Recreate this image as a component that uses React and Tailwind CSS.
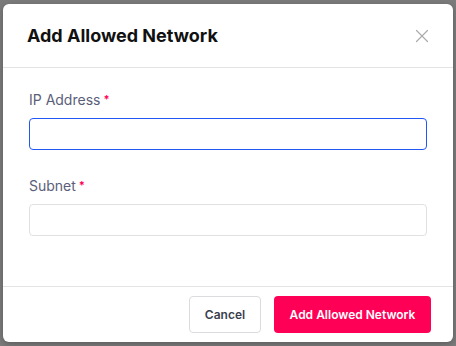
/**
 * Add Allowed Network modal over a dimmed page.
 */
import { X } from "lucide-react";

const FONT = { fontFamily: "Inter, 'Noto Sans', sans-serif" };

/** Label with red required marker */
function FieldLabel({ children }) {
  return (
    <label className="flex items-start text-[14px] leading-[20px] text-[#5b5e78]">
      {children}
      <span className="ml-[3px] mt-[2px] text-[11px] leading-[14px] font-bold text-[#ff0057]">*</span>
    </label>
  );
}

function App() {
  return (
    <div
      className="w-[456px] h-[346px] overflow-hidden bg-[#7b7b7b] pt-[4px] pl-[3px]"
      style={FONT}
    >
      <div className="w-[450px] h-[338px] bg-white rounded-[6px] flex flex-col shadow-[0_2px_6px_rgba(0,0,0,0.25)]">
        {/* ==================== HEADER ==================== */}
        <div className="h-[64px] flex items-center justify-between pl-[24px] pr-[20px] border-b border-[#e3e3e3]">
          <h2 className="text-[18px] leading-[28px] font-bold text-[#111]">
            Add Allowed Network
          </h2>
          <X size={22} strokeWidth={1.3} color="#ababab" />
        </div>

        {/* ==================== BODY ==================== */}
        <div className="flex-1 px-[26px] pt-[22px]">
          <FieldLabel>IP Address</FieldLabel>
          <input
            className="mt-[8px] block w-full h-[32px] rounded-[4px] border border-[#2357f5] outline-none px-3 text-[14px]"
          />

          <div className="mt-[26px]">
            <FieldLabel>Subnet</FieldLabel>
            <input
              className="mt-[8px] block w-full h-[32px] rounded-[4px] border border-[#e1e1e4] outline-none px-3 text-[14px]"
            />
          </div>
        </div>

        {/* ==================== FOOTER ==================== */}
        <div className="h-[56px] flex items-center justify-end gap-[13px] pr-[22px] border-t border-[#e3e3e3]">
          <button className="h-[37px] w-[72px] rounded-[4px] border border-[#dcdce0] bg-white text-[12px] font-semibold text-[#3b3f4e]">
            Cancel
          </button>
          <button className="h-[37px] w-[157px] rounded-[4px] bg-[#ff0057] text-[12px] font-semibold text-white">
            Add Allowed Network
          </button>
        </div>
      </div>
    </div>
  );
}

export default App;
